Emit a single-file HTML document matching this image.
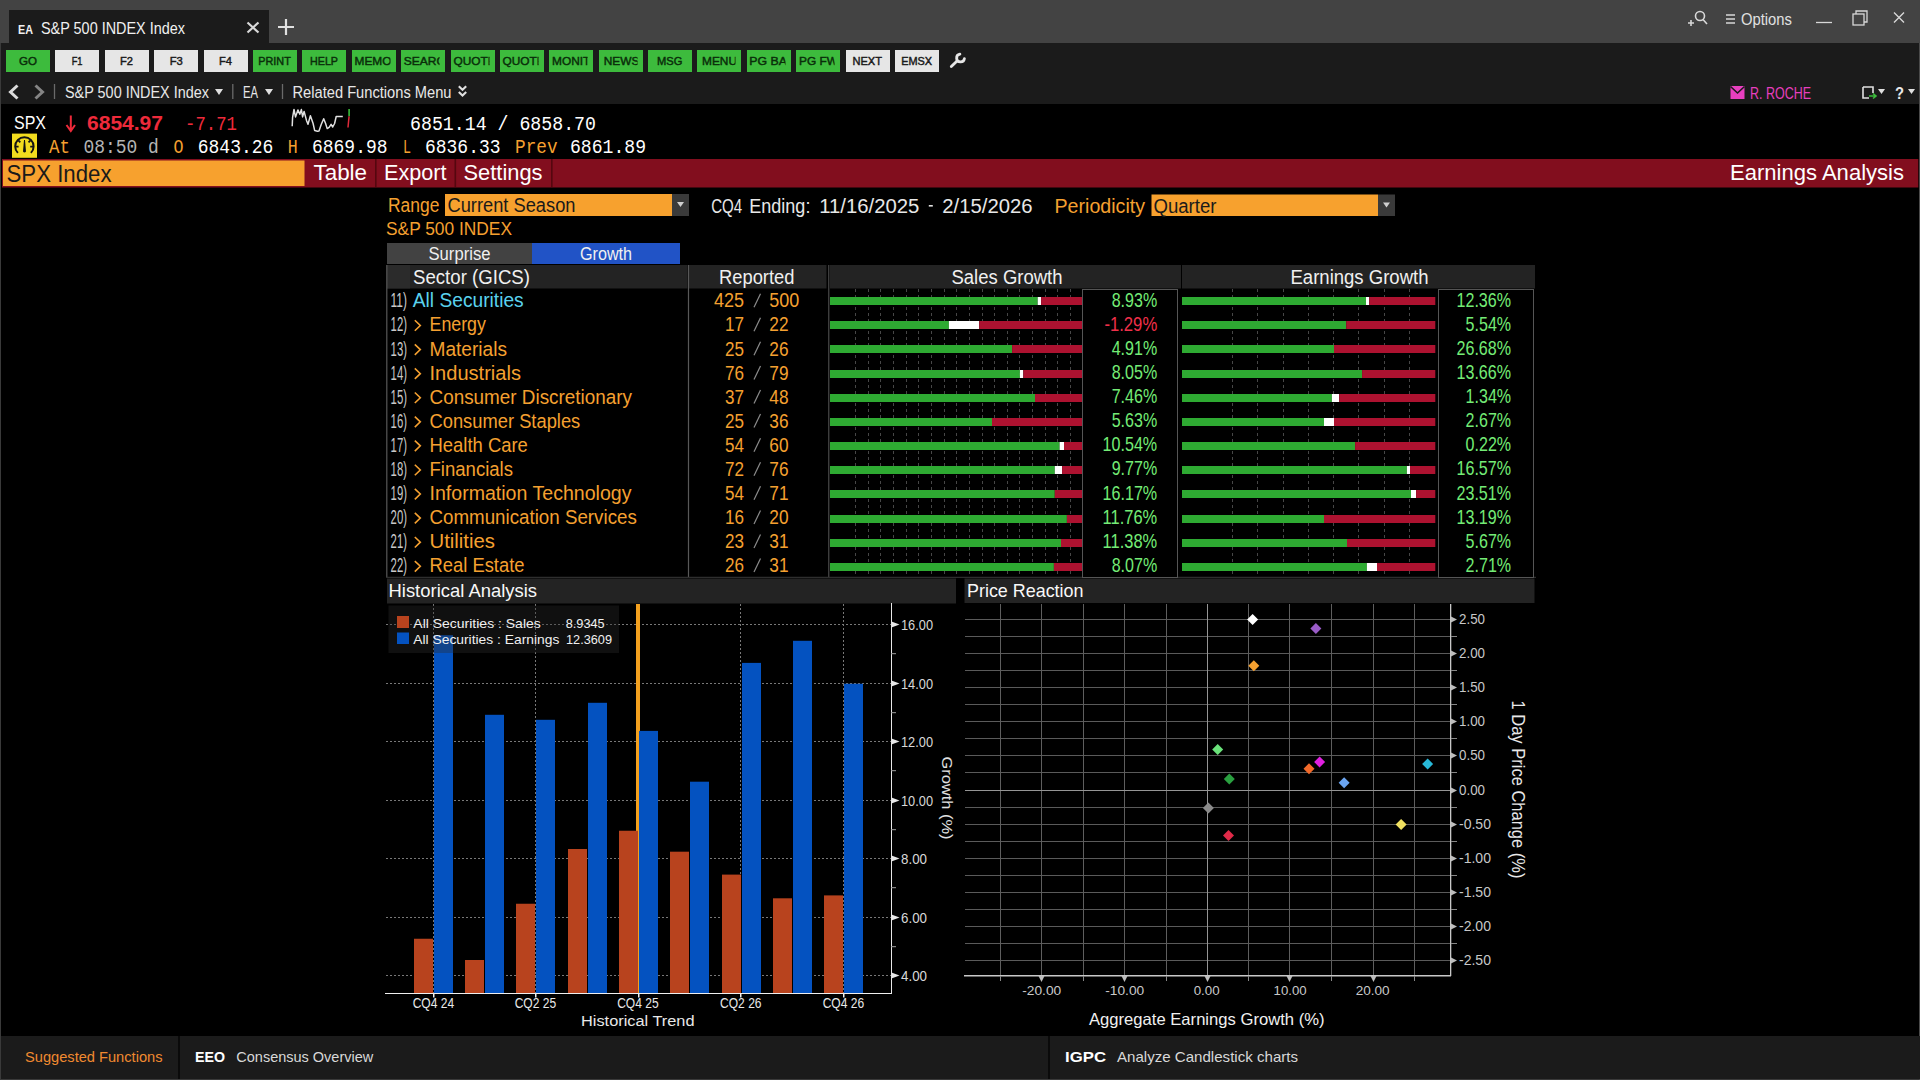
<!DOCTYPE html>
<html><head><meta charset="utf-8"><title>EA S&amp;P 500 INDEX Index</title>
<style>html,body{margin:0;padding:0;background:#000;overflow:hidden;width:1920px;height:1080px}
svg{display:block} text{font-family:"Liberation Sans",sans-serif}</style></head>
<body><svg width="1920" height="1080" viewBox="0 0 1920 1080" shape-rendering="auto">
<rect x="0" y="0" width="1920" height="1080" fill="#000" />
<rect x="0" y="0" width="1920" height="43" fill="#434343" />
<rect x="9" y="10" width="260" height="33" fill="#1b1b1b" />
<rect x="0" y="43" width="1920" height="61" fill="#1b1b1b" />
<line x1="0.5" y1="43" x2="0.5" y2="1080" stroke="#3a3a3a" stroke-width="1" />
<line x1="0" y1="1079.5" x2="1920" y2="1079.5" stroke="#3a3a3a" stroke-width="1" />
<line x1="1919.5" y1="43" x2="1919.5" y2="1080" stroke="#4a4a4a" stroke-width="1" />
<text x="18.00" y="34.2" font-size="13" fill="#f0f0f0" textLength="14.99" lengthAdjust="spacingAndGlyphs" font-weight="bold" >EA</text>
<text x="41.00" y="34.2" font-size="16.5" fill="#f0f0f0" textLength="144.00" lengthAdjust="spacingAndGlyphs" >S&amp;P 500 INDEX Index</text>
<path d="M247.5 22.5 L258.5 32.5 M258.5 22.5 L247.5 32.5" stroke="#d8d8d8" stroke-width="2.2"/>
<path d="M278 27 H294 M286 19 V35" stroke="#e0e0e0" stroke-width="2.2"/>
<circle cx="1700" cy="16" r="4.5" fill="none" stroke="#d8d8d8" stroke-width="1.6"/>
<path d="M1703 19.5 L1707 24 M1688 23 H1694 M1691 20 V26" stroke="#d8d8d8" stroke-width="1.6"/>
<path d="M1726 15 H1735 M1726 19 H1735 M1726 23 H1735" stroke="#d8d8d8" stroke-width="1.3"/>
<text x="1741.00" y="24.5" font-size="16.5" fill="#e0e0e0" textLength="50.98" lengthAdjust="spacingAndGlyphs" >Options</text>
<path d="M1816 22.5 H1832" stroke="#d8d8d8" stroke-width="1.3"/>
<rect x="1853" y="14" width="11" height="11" fill="none" stroke="#d8d8d8" stroke-width="1.3"/><path d="M1856 14 V11 H1867 V22 H1864" fill="none" stroke="#d8d8d8" stroke-width="1.3"/>
<path d="M1894 12.5 L1904 22.5 M1904 12.5 L1894 22.5" stroke="#d8d8d8" stroke-width="1.4"/>
<rect x="6" y="50" width="44" height="22" fill="#3dbb3d" />
<text x="19.00" y="64.8" font-size="11.5" fill="#0a2e0a" textLength="18.01" lengthAdjust="spacingAndGlyphs" stroke="#0a2e0a" stroke-width="0.45">GO</text>
<rect x="55" y="50" width="44" height="22" fill="#e6e6e6" />
<text x="71.70" y="64.8" font-size="11.5" fill="#1a1a1a" textLength="10.80" lengthAdjust="spacingAndGlyphs" stroke="#1a1a1a" stroke-width="0.45">F1</text>
<rect x="105" y="50" width="44" height="22" fill="#e6e6e6" />
<text x="120.00" y="64.8" font-size="11.5" fill="#1a1a1a" textLength="12.99" lengthAdjust="spacingAndGlyphs" stroke="#1a1a1a" stroke-width="0.45">F2</text>
<rect x="154" y="50" width="44" height="22" fill="#e6e6e6" />
<text x="169.70" y="64.8" font-size="11.5" fill="#1a1a1a" textLength="13.09" lengthAdjust="spacingAndGlyphs" stroke="#1a1a1a" stroke-width="0.45">F3</text>
<rect x="204" y="50" width="44" height="22" fill="#e6e6e6" />
<text x="219.00" y="64.8" font-size="11.5" fill="#1a1a1a" textLength="12.99" lengthAdjust="spacingAndGlyphs" stroke="#1a1a1a" stroke-width="0.45">F4</text>
<rect x="253" y="50" width="44" height="22" fill="#3dbb3d" />
<text x="258.30" y="64.8" font-size="11.5" fill="#0a2e0a" textLength="32.50" lengthAdjust="spacingAndGlyphs" stroke="#0a2e0a" stroke-width="0.45">PRINT</text>
<rect x="302" y="50" width="44" height="22" fill="#3dbb3d" />
<text x="310.00" y="64.8" font-size="11.5" fill="#0a2e0a" textLength="28.00" lengthAdjust="spacingAndGlyphs" stroke="#0a2e0a" stroke-width="0.45">HELP</text>
<rect x="352" y="50" width="44" height="22" fill="#3dbb3d" />
<svg x="352" y="50" width="38.5" height="22" overflow="hidden">
<text x="2.50" y="14.799999999999997" font-size="11.5" fill="#0a2e0a" textLength="36.96" lengthAdjust="spacingAndGlyphs" stroke="#0a2e0a" stroke-width="0.45">MEMO</text>
</svg>
<rect x="401" y="50" width="44" height="22" fill="#3dbb3d" />
<svg x="401" y="50" width="38.5" height="22" overflow="hidden">
<text x="2.75" y="14.799999999999997" font-size="11.5" fill="#0a2e0a" textLength="50.16" lengthAdjust="spacingAndGlyphs" stroke="#0a2e0a" stroke-width="0.45">SEARCH</text>
</svg>
<rect x="451" y="50" width="44" height="22" fill="#3dbb3d" />
<svg x="451" y="50" width="38.5" height="22" overflow="hidden">
<text x="2.50" y="14.799999999999997" font-size="11.5" fill="#0a2e0a" textLength="42.24" lengthAdjust="spacingAndGlyphs" stroke="#0a2e0a" stroke-width="0.45">QUOTE</text>
</svg>
<rect x="500" y="50" width="44" height="22" fill="#3dbb3d" />
<svg x="500" y="50" width="38.5" height="22" overflow="hidden">
<text x="2.40" y="14.799999999999997" font-size="11.5" fill="#0a2e0a" textLength="42.24" lengthAdjust="spacingAndGlyphs" stroke="#0a2e0a" stroke-width="0.45">QUOTE</text>
</svg>
<rect x="549" y="50" width="44" height="22" fill="#3dbb3d" />
<svg x="549" y="50" width="38.5" height="22" overflow="hidden">
<text x="3.00" y="14.799999999999997" font-size="11.5" fill="#0a2e0a" textLength="55.88" lengthAdjust="spacingAndGlyphs" stroke="#0a2e0a" stroke-width="0.45">MONITOR</text>
</svg>
<rect x="599" y="50" width="44" height="22" fill="#3dbb3d" />
<svg x="599" y="50" width="38.5" height="22" overflow="hidden">
<text x="4.70" y="14.799999999999997" font-size="11.5" fill="#0a2e0a" textLength="35.64" lengthAdjust="spacingAndGlyphs" stroke="#0a2e0a" stroke-width="0.45">NEWS</text>
</svg>
<rect x="648" y="50" width="44" height="22" fill="#3dbb3d" />
<text x="657.00" y="64.8" font-size="11.5" fill="#0a2e0a" textLength="25.40" lengthAdjust="spacingAndGlyphs" stroke="#0a2e0a" stroke-width="0.45">MSG</text>
<rect x="697" y="50" width="44" height="22" fill="#3dbb3d" />
<svg x="697" y="50" width="38.5" height="22" overflow="hidden">
<text x="5.00" y="14.799999999999997" font-size="11.5" fill="#0a2e0a" textLength="34.98" lengthAdjust="spacingAndGlyphs" stroke="#0a2e0a" stroke-width="0.45">MENU</text>
</svg>
<rect x="747" y="50" width="44" height="22" fill="#3dbb3d" />
<svg x="747" y="50" width="38.5" height="22" overflow="hidden">
<text x="2.30" y="14.799999999999997" font-size="11.5" fill="#0a2e0a" textLength="54.81" lengthAdjust="spacingAndGlyphs" stroke="#0a2e0a" stroke-width="0.45">PG BACK</text>
</svg>
<rect x="796" y="50" width="44" height="22" fill="#3dbb3d" />
<svg x="796" y="50" width="38.5" height="22" overflow="hidden">
<text x="3.00" y="14.799999999999997" font-size="11.5" fill="#0a2e0a" textLength="47.52" lengthAdjust="spacingAndGlyphs" stroke="#0a2e0a" stroke-width="0.45">PG FWD</text>
</svg>
<rect x="846" y="50" width="44" height="22" fill="#e6e6e6" />
<text x="852.50" y="64.8" font-size="11.5" fill="#1a1a1a" textLength="29.49" lengthAdjust="spacingAndGlyphs" stroke="#1a1a1a" stroke-width="0.45">NEXT</text>
<rect x="895" y="50" width="44" height="22" fill="#e6e6e6" />
<text x="901.20" y="64.8" font-size="11.5" fill="#1a1a1a" textLength="30.89" lengthAdjust="spacingAndGlyphs" stroke="#1a1a1a" stroke-width="0.45">EMSX</text>
<path d="M951.3 66.6 L956.8 61.2" stroke="#e6e6e6" stroke-width="2.8" stroke-linecap="round"/>
<path d="M959.9 54.2 A3.9 3.9 0 1 0 964.4 58.6" fill="none" stroke="#e6e6e6" stroke-width="2.8" stroke-linecap="round"/>
<path d="M17.5 85.5 L10.5 92 L17.5 98.5" fill="none" stroke="#dcdcdc" stroke-width="3"/>
<path d="M35.5 85.5 L42.5 92 L35.5 98.5" fill="none" stroke="#858585" stroke-width="3"/>
<line x1="54.5" y1="84" x2="54.5" y2="99" stroke="#6a6a6a" stroke-width="1.3" />
<text x="65.00" y="97.8" font-size="16.8" fill="#e8e8e8" textLength="144.00" lengthAdjust="spacingAndGlyphs" >S&amp;P 500 INDEX Index</text>
<path d="M215 89 H223 L219 95 Z" fill="#e0e0e0"/>
<line x1="232.8" y1="84" x2="232.8" y2="99" stroke="#6a6a6a" stroke-width="1.3" />
<text x="243.00" y="97.8" font-size="16.8" fill="#e8e8e8" textLength="14.99" lengthAdjust="spacingAndGlyphs" >EA</text>
<path d="M265 89 H273 L269 95 Z" fill="#e0e0e0"/>
<line x1="282.5" y1="84" x2="282.5" y2="99" stroke="#6a6a6a" stroke-width="1.3" />
<text x="292.50" y="97.8" font-size="16.8" fill="#e8e8e8" textLength="159.00" lengthAdjust="spacingAndGlyphs" >Related Functions Menu</text>
<path d="M458.8 86.2 L462.5 89.8 L466.2 86.2 M458.8 92 L462.5 95.6 L466.2 92" fill="none" stroke="#e0e0e0" stroke-width="2.1"/>
<rect x="1730.5" y="86" width="14" height="13" fill="#e83fbf"/><path d="M1730.5 86.5 L1737.5 93 L1744.5 86.5" fill="none" stroke="#1b1b1b" stroke-width="1.6"/>
<text x="1750.00" y="98.75" font-size="16.5" fill="#e83fbf" textLength="60.99" lengthAdjust="spacingAndGlyphs" >R. ROCHE</text>
<path d="M1863 87 H1873 V93 M1863 87 V98 H1869" fill="none" stroke="#e0e0e0" stroke-width="1.6"/><path d="M1869 96 H1875 M1873 93.5 L1876 96 L1873 98.5" fill="none" stroke="#3cbc3c" stroke-width="1.6"/>
<path d="M1878 89 H1885 L1881.5 94 Z" fill="#e0e0e0"/>
<text x="1895.00" y="99" font-size="17" fill="#e8e8e8" textLength="9.01" lengthAdjust="spacingAndGlyphs" font-weight="bold" >?</text>
<path d="M1908 89 H1915 L1911.5 94 Z" fill="#e0e0e0"/>
<text x="14.00" y="129.3" font-size="17.5" fill="#ffffff" textLength="32.02" lengthAdjust="spacingAndGlyphs" >SPX</text>
<path d="M70.8 115.5 V130 M66.5 125 L70.8 131 L75 125" fill="none" stroke="#ee2a3a" stroke-width="2"/>
<text x="87.00" y="130.25" font-size="20" fill="#ee2a3a" textLength="76.00" lengthAdjust="spacingAndGlyphs" font-weight="bold" >6854.97</text>
<text x="185.00" y="130.25" font-size="20" fill="#ee2a3a" textLength="52.01" lengthAdjust="spacingAndGlyphs" style="font-family:'Liberation Mono'" >-7.71</text>
<polyline points="292.2,126.3 292.6,117.3 294,109.5 295.5,116.9 297.9,109.9 299.8,114.2 301.4,109.5 302.6,116.9 304.1,111.4 306.5,120.4 308,124.3 310.4,115.7 313.1,123.5 314.7,130.6 317.4,131.3 319,131 321.3,124.3 323.7,118.8 325.6,123.5 327.2,128.6 329.1,127.4 331.1,124.3 332.7,127 334.6,123.5 336.2,116.5 342.8,116.5" fill="none" stroke="#e0e0e0" stroke-width="1.5" stroke-linejoin="round"/>
<line x1="349.1" y1="109" x2="349.1" y2="116.3" stroke="#3cbc3c" stroke-width="1.6" />
<path d="M349.1 116.3 L348.6 121 L348 127.5" fill="none" stroke="#e02a3a" stroke-width="1.5"/>
<text x="410.00" y="130.25" font-size="20" fill="#ffffff" textLength="185.99" lengthAdjust="spacingAndGlyphs" style="font-family:'Liberation Mono'" >6851.14 / 6858.70</text>
<rect x="12" y="133.6" width="25" height="24.2" fill="#f3dc1e"/>
<path d="M17.9 152.9 A9.2 9.2 0 1 1 30.9 152.9" fill="none" stroke="#141414" stroke-width="2"/>
<path d="M15.5 146.6 H18.6 M30.2 146.6 H33.3 M18.3 140.4 L20.3 142.4 M30.5 140.4 L28.5 142.4" stroke="#141414" stroke-width="1.8"/>
<path d="M24 140 L25 140 L26 151.5 Q24.5 153.5 23 151.5 Z" fill="#141414"/>
<text x="49.00" y="153.2" font-size="20" fill="#f5a030" textLength="21.00" lengthAdjust="spacingAndGlyphs" style="font-family:'Liberation Mono'" >At</text>
<text x="83.40" y="153.2" font-size="20" fill="#b4b4b4" textLength="75.51" lengthAdjust="spacingAndGlyphs" style="font-family:'Liberation Mono'" >08:50 d</text>
<text x="173.40" y="153.2" font-size="20" fill="#f5a030" textLength="10.00" lengthAdjust="spacingAndGlyphs" style="font-family:'Liberation Mono'" >O</text>
<text x="197.80" y="153.2" font-size="20" fill="#ffffff" textLength="75.51" lengthAdjust="spacingAndGlyphs" style="font-family:'Liberation Mono'" >6843.26</text>
<text x="287.80" y="153.2" font-size="20" fill="#f5a030" textLength="10.00" lengthAdjust="spacingAndGlyphs" style="font-family:'Liberation Mono'" >H</text>
<text x="312.00" y="153.2" font-size="20" fill="#ffffff" textLength="75.51" lengthAdjust="spacingAndGlyphs" style="font-family:'Liberation Mono'" >6869.98</text>
<text x="403.00" y="153.2" font-size="20" fill="#f5a030" textLength="8.00" lengthAdjust="spacingAndGlyphs" style="font-family:'Liberation Mono'" >L</text>
<text x="425.00" y="153.2" font-size="20" fill="#ffffff" textLength="75.51" lengthAdjust="spacingAndGlyphs" style="font-family:'Liberation Mono'" >6836.33</text>
<text x="515.00" y="153.2" font-size="20" fill="#f5a030" textLength="42.51" lengthAdjust="spacingAndGlyphs" style="font-family:'Liberation Mono'" >Prev</text>
<text x="570.00" y="153.2" font-size="20" fill="#ffffff" textLength="76.01" lengthAdjust="spacingAndGlyphs" style="font-family:'Liberation Mono'" >6861.89</text>
<rect x="2" y="159" width="1916.3" height="28.5" fill="#820e1e" />
<rect x="3" y="160.5" width="301.5" height="25.5" fill="#f7a12e" />
<rect x="375" y="159" width="1.6" height="28" fill="#55070f" />
<rect x="454.5" y="159" width="1.6" height="28" fill="#55070f" />
<rect x="551" y="159" width="1.6" height="28" fill="#55070f" />
<text x="6.50" y="181.7" font-size="23" fill="#1a1a1a" textLength="105.00" lengthAdjust="spacingAndGlyphs" >SPX Index</text>
<text x="313.50" y="180.3" font-size="22.5" fill="#ffffff" textLength="53.52" lengthAdjust="spacingAndGlyphs" >Table</text>
<text x="384.00" y="180.3" font-size="22.5" fill="#ffffff" textLength="62.50" lengthAdjust="spacingAndGlyphs" >Export</text>
<text x="463.50" y="180.3" font-size="22.5" fill="#ffffff" textLength="79.02" lengthAdjust="spacingAndGlyphs" >Settings</text>
<text x="1730.00" y="180.3" font-size="22.5" fill="#ffffff" textLength="174.02" lengthAdjust="spacingAndGlyphs" >Earnings Analysis</text>
<text x="388.00" y="211.8" font-size="19.5" fill="#f5a030" textLength="51.49" lengthAdjust="spacingAndGlyphs" >Range</text>
<rect x="445" y="194" width="227" height="22" fill="#f7a12e" />
<rect x="672" y="194" width="17" height="22" fill="#3a3a3a" />
<path d="M677 202 H684 L680.5 207 Z" fill="#cfcfcf"/>
<text x="447.50" y="211.8" font-size="19.5" fill="#1a1a1a" textLength="127.98" lengthAdjust="spacingAndGlyphs" >Current Season</text>
<text x="711.20" y="212.5" font-size="19.5" fill="#e8e8e8" textLength="31.02" lengthAdjust="spacingAndGlyphs" >CQ4</text>
<text x="749.30" y="212.5" font-size="19.5" fill="#e8e8e8" textLength="61.09" lengthAdjust="spacingAndGlyphs" >Ending:</text>
<text x="819.20" y="212.5" font-size="19.5" fill="#e8e8e8" textLength="100.12" lengthAdjust="spacingAndGlyphs" >11/16/2025</text>
<text x="942.30" y="212.5" font-size="19.5" fill="#e8e8e8" textLength="90.28" lengthAdjust="spacingAndGlyphs" >2/15/2026</text>
<rect x="928.8" y="205" width="4" height="1.6" fill="#e0e0e0" />
<text x="1054.50" y="212.5" font-size="19.5" fill="#f5a030" textLength="90.51" lengthAdjust="spacingAndGlyphs" >Periodicity</text>
<rect x="1151.5" y="194.5" width="226.5" height="21.5" fill="#f7a12e" />
<rect x="1378" y="194.5" width="17" height="21.5" fill="#3a3a3a" />
<path d="M1383 202.5 H1390 L1386.5 207.5 Z" fill="#cfcfcf"/>
<text x="1153.50" y="212.5" font-size="19.5" fill="#1a1a1a" textLength="63.00" lengthAdjust="spacingAndGlyphs" >Quarter</text>
<text x="386.00" y="235.3" font-size="19" fill="#f5a030" textLength="126.01" lengthAdjust="spacingAndGlyphs" >S&amp;P 500 INDEX</text>
<rect x="387" y="243" width="145" height="21" fill="#424242" />
<rect x="532" y="243" width="148" height="21" fill="#2153c6" />
<text x="428.50" y="259.5" font-size="17.5" fill="#f0f0f0" textLength="62.02" lengthAdjust="spacingAndGlyphs" >Surprise</text>
<text x="580.00" y="259.5" font-size="17.5" fill="#f0f0f0" textLength="52.01" lengthAdjust="spacingAndGlyphs" >Growth</text>
<rect x="387" y="265" width="300.5" height="23.5" fill="#232323" />
<rect x="387" y="265" width="23" height="23.5" fill="#2b2b2b" />
<rect x="689" y="265" width="137.5" height="23.5" fill="#232323" />
<rect x="830" y="265" width="351" height="23.5" fill="#232323" />
<rect x="1182" y="265" width="353" height="23.5" fill="#232323" />
<text x="413.00" y="284.2" font-size="20" fill="#f0f0f0" textLength="116.98" lengthAdjust="spacingAndGlyphs" >Sector (GICS)</text>
<text x="719.00" y="284.2" font-size="20" fill="#f0f0f0" textLength="75.48" lengthAdjust="spacingAndGlyphs" >Reported</text>
<text x="951.50" y="283.8" font-size="20" fill="#f0f0f0" textLength="111.00" lengthAdjust="spacingAndGlyphs" >Sales Growth</text>
<text x="1290.50" y="283.8" font-size="20" fill="#f0f0f0" textLength="138.01" lengthAdjust="spacingAndGlyphs" >Earnings Growth</text>
<line x1="386.8" y1="265" x2="386.8" y2="577" stroke="#585858" stroke-width="1.2" />
<line x1="688.5" y1="265" x2="688.5" y2="577" stroke="#585858" stroke-width="1.2" />
<line x1="828.8" y1="265" x2="828.8" y2="577" stroke="#585858" stroke-width="1" />
<line x1="386" y1="577.3" x2="1536" y2="577.3" stroke="#3a3a3a" stroke-width="1" />
<line x1="855.5" y1="289" x2="855.5" y2="577" stroke="#474747" stroke-width="1" stroke-dasharray="3 3"/>
<line x1="868.5" y1="289" x2="868.5" y2="577" stroke="#474747" stroke-width="1" stroke-dasharray="3 3"/>
<line x1="880.5" y1="289" x2="880.5" y2="577" stroke="#474747" stroke-width="1" stroke-dasharray="3 3"/>
<line x1="893.5" y1="289" x2="893.5" y2="577" stroke="#474747" stroke-width="1" stroke-dasharray="3 3"/>
<line x1="906.5" y1="289" x2="906.5" y2="577" stroke="#474747" stroke-width="1" stroke-dasharray="3 3"/>
<line x1="918.5" y1="289" x2="918.5" y2="577" stroke="#474747" stroke-width="1" stroke-dasharray="3 3"/>
<line x1="931.5" y1="289" x2="931.5" y2="577" stroke="#474747" stroke-width="1" stroke-dasharray="3 3"/>
<line x1="944.5" y1="289" x2="944.5" y2="577" stroke="#474747" stroke-width="1" stroke-dasharray="3 3"/>
<line x1="956.5" y1="289" x2="956.5" y2="577" stroke="#474747" stroke-width="1" stroke-dasharray="3 3"/>
<line x1="969.5" y1="289" x2="969.5" y2="577" stroke="#474747" stroke-width="1" stroke-dasharray="3 3"/>
<line x1="982.5" y1="289" x2="982.5" y2="577" stroke="#474747" stroke-width="1" stroke-dasharray="3 3"/>
<line x1="994.5" y1="289" x2="994.5" y2="577" stroke="#474747" stroke-width="1" stroke-dasharray="3 3"/>
<line x1="1007.5" y1="289" x2="1007.5" y2="577" stroke="#474747" stroke-width="1" stroke-dasharray="3 3"/>
<line x1="1019.5" y1="289" x2="1019.5" y2="577" stroke="#474747" stroke-width="1" stroke-dasharray="3 3"/>
<line x1="1032.5" y1="289" x2="1032.5" y2="577" stroke="#474747" stroke-width="1" stroke-dasharray="3 3"/>
<line x1="1045.5" y1="289" x2="1045.5" y2="577" stroke="#474747" stroke-width="1" stroke-dasharray="3 3"/>
<line x1="1057.5" y1="289" x2="1057.5" y2="577" stroke="#474747" stroke-width="1" stroke-dasharray="3 3"/>
<line x1="1070.5" y1="289" x2="1070.5" y2="577" stroke="#474747" stroke-width="1" stroke-dasharray="3 3"/>
<line x1="1232.5" y1="289" x2="1232.5" y2="577" stroke="#474747" stroke-width="1" stroke-dasharray="3 3"/>
<line x1="1257.5" y1="289" x2="1257.5" y2="577" stroke="#474747" stroke-width="1" stroke-dasharray="3 3"/>
<line x1="1283.5" y1="289" x2="1283.5" y2="577" stroke="#474747" stroke-width="1" stroke-dasharray="3 3"/>
<line x1="1308.5" y1="289" x2="1308.5" y2="577" stroke="#474747" stroke-width="1" stroke-dasharray="3 3"/>
<line x1="1333.5" y1="289" x2="1333.5" y2="577" stroke="#474747" stroke-width="1" stroke-dasharray="3 3"/>
<line x1="1358.5" y1="289" x2="1358.5" y2="577" stroke="#474747" stroke-width="1" stroke-dasharray="3 3"/>
<line x1="1384.5" y1="289" x2="1384.5" y2="577" stroke="#474747" stroke-width="1" stroke-dasharray="3 3"/>
<line x1="1409.5" y1="289" x2="1409.5" y2="577" stroke="#474747" stroke-width="1" stroke-dasharray="3 3"/>
<rect x="830" y="297" width="207.70000000000005" height="8" fill="#2eaa32" />
<rect x="1037.7" y="297" width="3.3999999999998636" height="8" fill="#ffffff" />
<rect x="1041.1" y="297" width="40.90000000000009" height="8" fill="#ad1230" />
<rect x="1182" y="297" width="184" height="8" fill="#2eaa32" />
<rect x="1366" y="297" width="3.2000000000000455" height="8" fill="#ffffff" />
<rect x="1369.2" y="297" width="66.09999999999991" height="8" fill="#ad1230" />
<rect x="830" y="321" width="118.89999999999998" height="8" fill="#2eaa32" />
<rect x="948.9" y="321" width="30.300000000000068" height="8" fill="#ffffff" />
<rect x="979.2" y="321" width="102.79999999999995" height="8" fill="#ad1230" />
<rect x="1182" y="321" width="164.20000000000005" height="8" fill="#2eaa32" />
<rect x="1346.2" y="321" width="89.09999999999991" height="8" fill="#ad1230" />
<rect x="830" y="345" width="182.10000000000002" height="8" fill="#2eaa32" />
<rect x="1012.1" y="345" width="69.89999999999998" height="8" fill="#ad1230" />
<rect x="1182" y="345" width="152" height="8" fill="#2eaa32" />
<rect x="1334" y="345" width="101.29999999999995" height="8" fill="#ad1230" />
<rect x="830" y="370" width="189.89999999999998" height="8" fill="#2eaa32" />
<rect x="1019.9" y="370" width="3.3999999999999773" height="8" fill="#ffffff" />
<rect x="1023.3" y="370" width="58.700000000000045" height="8" fill="#ad1230" />
<rect x="1182" y="370" width="180.0999999999999" height="8" fill="#2eaa32" />
<rect x="1362.1" y="370" width="73.20000000000005" height="8" fill="#ad1230" />
<rect x="830" y="394" width="205" height="8" fill="#2eaa32" />
<rect x="1035" y="394" width="47" height="8" fill="#ad1230" />
<rect x="1182" y="394" width="149.9000000000001" height="8" fill="#2eaa32" />
<rect x="1331.9" y="394" width="7.2999999999999545" height="8" fill="#ffffff" />
<rect x="1339.2" y="394" width="96.09999999999991" height="8" fill="#ad1230" />
<rect x="830" y="418" width="162" height="8" fill="#2eaa32" />
<rect x="992" y="418" width="90" height="8" fill="#ad1230" />
<rect x="1182" y="418" width="142" height="8" fill="#2eaa32" />
<rect x="1324" y="418" width="10" height="8" fill="#ffffff" />
<rect x="1334" y="418" width="101.29999999999995" height="8" fill="#ad1230" />
<rect x="830" y="442" width="229.5999999999999" height="8" fill="#2eaa32" />
<rect x="1059.6" y="442" width="4.400000000000091" height="8" fill="#ffffff" />
<rect x="1064" y="442" width="18" height="8" fill="#ad1230" />
<rect x="1182" y="442" width="173.0999999999999" height="8" fill="#2eaa32" />
<rect x="1355.1" y="442" width="80.20000000000005" height="8" fill="#ad1230" />
<rect x="830" y="466" width="224.79999999999995" height="8" fill="#2eaa32" />
<rect x="1054.8" y="466" width="7.2999999999999545" height="8" fill="#ffffff" />
<rect x="1062.1" y="466" width="19.90000000000009" height="8" fill="#ad1230" />
<rect x="1182" y="466" width="224.9000000000001" height="8" fill="#2eaa32" />
<rect x="1406.9" y="466" width="3.099999999999909" height="8" fill="#ffffff" />
<rect x="1410" y="466" width="25.299999999999955" height="8" fill="#ad1230" />
<rect x="830" y="490" width="224.79999999999995" height="8" fill="#2eaa32" />
<rect x="1054.8" y="490" width="27.200000000000045" height="8" fill="#ad1230" />
<rect x="1182" y="490" width="229" height="8" fill="#2eaa32" />
<rect x="1411" y="490" width="5.099999999999909" height="8" fill="#ffffff" />
<rect x="1416.1" y="490" width="19.200000000000045" height="8" fill="#ad1230" />
<rect x="830" y="515" width="236.9000000000001" height="8" fill="#2eaa32" />
<rect x="1066.9" y="515" width="15.099999999999909" height="8" fill="#ad1230" />
<rect x="1182" y="515" width="142" height="8" fill="#2eaa32" />
<rect x="1324" y="515" width="111.29999999999995" height="8" fill="#ad1230" />
<rect x="830" y="539" width="231" height="8" fill="#2eaa32" />
<rect x="1061" y="539" width="21" height="8" fill="#ad1230" />
<rect x="1182" y="539" width="165" height="8" fill="#2eaa32" />
<rect x="1347" y="539" width="88.29999999999995" height="8" fill="#ad1230" />
<rect x="830" y="563" width="223.9000000000001" height="8" fill="#2eaa32" />
<rect x="1053.9" y="563" width="28.09999999999991" height="8" fill="#ad1230" />
<rect x="1182" y="563" width="184.9000000000001" height="8" fill="#2eaa32" />
<rect x="1366.9" y="563" width="10.099999999999909" height="8" fill="#ffffff" />
<rect x="1377" y="563" width="58.299999999999955" height="8" fill="#ad1230" />
<rect x="1082.5" y="289.5" width="95" height="288" fill="#000" stroke="#555" stroke-width="1"/>
<rect x="1438.5" y="289.5" width="95" height="288" fill="#000" stroke="#555" stroke-width="1"/>
<text x="390.60" y="307.4" font-size="19.5" fill="#c8c8c8" textLength="16.41" lengthAdjust="spacingAndGlyphs" >11)</text>
<text x="412.80" y="307.4" font-size="19.3" fill="#5ad2ee" textLength="110.90" lengthAdjust="spacingAndGlyphs" >All Securities</text>
<text x="714.00" y="307.4" font-size="19.3" fill="#f5a030" textLength="30.02" lengthAdjust="spacingAndGlyphs" >425</text>
<path d="M760.5 293.7 L754 307.2" stroke="#8c8c8c" stroke-width="1.2"/>
<text x="769.30" y="307.4" font-size="19.3" fill="#f5a030" textLength="30.02" lengthAdjust="spacingAndGlyphs" >500</text>
<text x="1111.70" y="306.9" font-size="19.8" fill="#74ec76" textLength="45.51" lengthAdjust="spacingAndGlyphs" >8.93%</text>
<text x="1456.50" y="306.9" font-size="19.8" fill="#74ec76" textLength="54.59" lengthAdjust="spacingAndGlyphs" >12.36%</text>
<text x="390.60" y="331.47999999999996" font-size="19.5" fill="#c8c8c8" textLength="16.40" lengthAdjust="spacingAndGlyphs" >12)</text>
<path d="M414.8 320.28 L420.3 325.47999999999996 L414.8 330.78" fill="none" stroke="#f5a030" stroke-width="1.6"/>
<text x="429.50" y="331.47999999999996" font-size="19.3" fill="#f5a030" textLength="56.42" lengthAdjust="spacingAndGlyphs" >Energy</text>
<text x="725.00" y="331.47999999999996" font-size="19.3" fill="#f5a030" textLength="19.00" lengthAdjust="spacingAndGlyphs" >17</text>
<path d="M760.5 317.78 L754 331.28" stroke="#8c8c8c" stroke-width="1.2"/>
<text x="769.30" y="331.47999999999996" font-size="19.3" fill="#f5a030" textLength="19.20" lengthAdjust="spacingAndGlyphs" >22</text>
<text x="1104.40" y="330.97999999999996" font-size="19.8" fill="#f0304a" textLength="52.82" lengthAdjust="spacingAndGlyphs" >-1.29%</text>
<text x="1465.60" y="330.97999999999996" font-size="19.8" fill="#74ec76" textLength="45.51" lengthAdjust="spacingAndGlyphs" >5.54%</text>
<text x="390.60" y="355.56" font-size="19.5" fill="#c8c8c8" textLength="16.40" lengthAdjust="spacingAndGlyphs" >13)</text>
<path d="M414.8 344.36 L420.3 349.56 L414.8 354.86" fill="none" stroke="#f5a030" stroke-width="1.6"/>
<text x="429.50" y="355.56" font-size="19.3" fill="#f5a030" textLength="77.49" lengthAdjust="spacingAndGlyphs" >Materials</text>
<text x="725.00" y="355.56" font-size="19.3" fill="#f5a030" textLength="19.00" lengthAdjust="spacingAndGlyphs" >25</text>
<path d="M760.5 341.86 L754 355.36" stroke="#8c8c8c" stroke-width="1.2"/>
<text x="769.30" y="355.56" font-size="19.3" fill="#f5a030" textLength="19.20" lengthAdjust="spacingAndGlyphs" >26</text>
<text x="1111.70" y="355.06" font-size="19.8" fill="#74ec76" textLength="45.51" lengthAdjust="spacingAndGlyphs" >4.91%</text>
<text x="1456.50" y="355.06" font-size="19.8" fill="#74ec76" textLength="54.59" lengthAdjust="spacingAndGlyphs" >26.68%</text>
<text x="390.60" y="379.64" font-size="19.5" fill="#c8c8c8" textLength="16.40" lengthAdjust="spacingAndGlyphs" >14)</text>
<path d="M414.8 368.44 L420.3 373.64 L414.8 378.94" fill="none" stroke="#f5a030" stroke-width="1.6"/>
<text x="429.50" y="379.64" font-size="19.3" fill="#f5a030" textLength="91.51" lengthAdjust="spacingAndGlyphs" >Industrials</text>
<text x="725.00" y="379.64" font-size="19.3" fill="#f5a030" textLength="19.00" lengthAdjust="spacingAndGlyphs" >76</text>
<path d="M760.5 365.94 L754 379.44" stroke="#8c8c8c" stroke-width="1.2"/>
<text x="769.30" y="379.64" font-size="19.3" fill="#f5a030" textLength="19.20" lengthAdjust="spacingAndGlyphs" >79</text>
<text x="1111.70" y="379.14" font-size="19.8" fill="#74ec76" textLength="45.51" lengthAdjust="spacingAndGlyphs" >8.05%</text>
<text x="1456.50" y="379.14" font-size="19.8" fill="#74ec76" textLength="54.59" lengthAdjust="spacingAndGlyphs" >13.66%</text>
<text x="390.60" y="403.71999999999997" font-size="19.5" fill="#c8c8c8" textLength="16.40" lengthAdjust="spacingAndGlyphs" >15)</text>
<path d="M414.8 392.52 L420.3 397.71999999999997 L414.8 403.02" fill="none" stroke="#f5a030" stroke-width="1.6"/>
<text x="429.50" y="403.71999999999997" font-size="19.3" fill="#f5a030" textLength="202.52" lengthAdjust="spacingAndGlyphs" >Consumer Discretionary</text>
<text x="725.00" y="403.71999999999997" font-size="19.3" fill="#f5a030" textLength="19.00" lengthAdjust="spacingAndGlyphs" >37</text>
<path d="M760.5 390.02 L754 403.52" stroke="#8c8c8c" stroke-width="1.2"/>
<text x="769.30" y="403.71999999999997" font-size="19.3" fill="#f5a030" textLength="19.20" lengthAdjust="spacingAndGlyphs" >48</text>
<text x="1111.70" y="403.21999999999997" font-size="19.8" fill="#74ec76" textLength="45.51" lengthAdjust="spacingAndGlyphs" >7.46%</text>
<text x="1465.60" y="403.21999999999997" font-size="19.8" fill="#74ec76" textLength="45.51" lengthAdjust="spacingAndGlyphs" >1.34%</text>
<text x="390.60" y="427.79999999999995" font-size="19.5" fill="#c8c8c8" textLength="16.40" lengthAdjust="spacingAndGlyphs" >16)</text>
<path d="M414.8 416.59999999999997 L420.3 421.79999999999995 L414.8 427.09999999999997" fill="none" stroke="#f5a030" stroke-width="1.6"/>
<text x="429.50" y="427.79999999999995" font-size="19.3" fill="#f5a030" textLength="150.78" lengthAdjust="spacingAndGlyphs" >Consumer Staples</text>
<text x="725.00" y="427.79999999999995" font-size="19.3" fill="#f5a030" textLength="19.00" lengthAdjust="spacingAndGlyphs" >25</text>
<path d="M760.5 414.09999999999997 L754 427.59999999999997" stroke="#8c8c8c" stroke-width="1.2"/>
<text x="769.30" y="427.79999999999995" font-size="19.3" fill="#f5a030" textLength="19.20" lengthAdjust="spacingAndGlyphs" >36</text>
<text x="1111.70" y="427.29999999999995" font-size="19.8" fill="#74ec76" textLength="45.51" lengthAdjust="spacingAndGlyphs" >5.63%</text>
<text x="1465.60" y="427.29999999999995" font-size="19.8" fill="#74ec76" textLength="45.51" lengthAdjust="spacingAndGlyphs" >2.67%</text>
<text x="390.60" y="451.87999999999994" font-size="19.5" fill="#c8c8c8" textLength="16.40" lengthAdjust="spacingAndGlyphs" >17)</text>
<path d="M414.8 440.67999999999995 L420.3 445.87999999999994 L414.8 451.17999999999995" fill="none" stroke="#f5a030" stroke-width="1.6"/>
<text x="429.50" y="451.87999999999994" font-size="19.3" fill="#f5a030" textLength="98.32" lengthAdjust="spacingAndGlyphs" >Health Care</text>
<text x="725.00" y="451.87999999999994" font-size="19.3" fill="#f5a030" textLength="19.00" lengthAdjust="spacingAndGlyphs" >54</text>
<path d="M760.5 438.17999999999995 L754 451.67999999999995" stroke="#8c8c8c" stroke-width="1.2"/>
<text x="769.30" y="451.87999999999994" font-size="19.3" fill="#f5a030" textLength="19.20" lengthAdjust="spacingAndGlyphs" >60</text>
<text x="1102.60" y="451.37999999999994" font-size="19.8" fill="#74ec76" textLength="54.59" lengthAdjust="spacingAndGlyphs" >10.54%</text>
<text x="1465.60" y="451.37999999999994" font-size="19.8" fill="#74ec76" textLength="45.51" lengthAdjust="spacingAndGlyphs" >0.22%</text>
<text x="390.60" y="475.96" font-size="19.5" fill="#c8c8c8" textLength="16.40" lengthAdjust="spacingAndGlyphs" >18)</text>
<path d="M414.8 464.76 L420.3 469.96 L414.8 475.26" fill="none" stroke="#f5a030" stroke-width="1.6"/>
<text x="429.50" y="475.96" font-size="19.3" fill="#f5a030" textLength="83.49" lengthAdjust="spacingAndGlyphs" >Financials</text>
<text x="725.00" y="475.96" font-size="19.3" fill="#f5a030" textLength="19.00" lengthAdjust="spacingAndGlyphs" >72</text>
<path d="M760.5 462.26 L754 475.76" stroke="#8c8c8c" stroke-width="1.2"/>
<text x="769.30" y="475.96" font-size="19.3" fill="#f5a030" textLength="19.20" lengthAdjust="spacingAndGlyphs" >76</text>
<text x="1111.70" y="475.46" font-size="19.8" fill="#74ec76" textLength="45.51" lengthAdjust="spacingAndGlyphs" >9.77%</text>
<text x="1456.50" y="475.46" font-size="19.8" fill="#74ec76" textLength="54.59" lengthAdjust="spacingAndGlyphs" >16.57%</text>
<text x="390.60" y="500.03999999999996" font-size="19.5" fill="#c8c8c8" textLength="16.40" lengthAdjust="spacingAndGlyphs" >19)</text>
<path d="M414.8 488.84 L420.3 494.03999999999996 L414.8 499.34" fill="none" stroke="#f5a030" stroke-width="1.6"/>
<text x="429.50" y="500.03999999999996" font-size="19.3" fill="#f5a030" textLength="201.98" lengthAdjust="spacingAndGlyphs" >Information Technology</text>
<text x="725.00" y="500.03999999999996" font-size="19.3" fill="#f5a030" textLength="19.00" lengthAdjust="spacingAndGlyphs" >54</text>
<path d="M760.5 486.34 L754 499.84" stroke="#8c8c8c" stroke-width="1.2"/>
<text x="769.30" y="500.03999999999996" font-size="19.3" fill="#f5a030" textLength="19.20" lengthAdjust="spacingAndGlyphs" >71</text>
<text x="1102.60" y="499.53999999999996" font-size="19.8" fill="#74ec76" textLength="54.59" lengthAdjust="spacingAndGlyphs" >16.17%</text>
<text x="1456.50" y="499.53999999999996" font-size="19.8" fill="#74ec76" textLength="54.59" lengthAdjust="spacingAndGlyphs" >23.51%</text>
<text x="390.60" y="524.12" font-size="19.5" fill="#c8c8c8" textLength="16.40" lengthAdjust="spacingAndGlyphs" >20)</text>
<path d="M414.8 512.92 L420.3 518.12 L414.8 523.42" fill="none" stroke="#f5a030" stroke-width="1.6"/>
<text x="429.50" y="524.12" font-size="19.3" fill="#f5a030" textLength="207.30" lengthAdjust="spacingAndGlyphs" >Communication Services</text>
<text x="725.00" y="524.12" font-size="19.3" fill="#f5a030" textLength="19.00" lengthAdjust="spacingAndGlyphs" >16</text>
<path d="M760.5 510.41999999999996 L754 523.92" stroke="#8c8c8c" stroke-width="1.2"/>
<text x="769.30" y="524.12" font-size="19.3" fill="#f5a030" textLength="19.20" lengthAdjust="spacingAndGlyphs" >20</text>
<text x="1102.60" y="523.62" font-size="19.8" fill="#74ec76" textLength="54.60" lengthAdjust="spacingAndGlyphs" >11.76%</text>
<text x="1456.50" y="523.62" font-size="19.8" fill="#74ec76" textLength="54.59" lengthAdjust="spacingAndGlyphs" >13.19%</text>
<text x="390.60" y="548.2" font-size="19.5" fill="#c8c8c8" textLength="16.40" lengthAdjust="spacingAndGlyphs" >21)</text>
<path d="M414.8 537.0 L420.3 542.2 L414.8 547.5" fill="none" stroke="#f5a030" stroke-width="1.6"/>
<text x="429.50" y="548.2" font-size="19.3" fill="#f5a030" textLength="65.51" lengthAdjust="spacingAndGlyphs" >Utilities</text>
<text x="725.00" y="548.2" font-size="19.3" fill="#f5a030" textLength="19.00" lengthAdjust="spacingAndGlyphs" >23</text>
<path d="M760.5 534.5 L754 548.0" stroke="#8c8c8c" stroke-width="1.2"/>
<text x="769.30" y="548.2" font-size="19.3" fill="#f5a030" textLength="19.20" lengthAdjust="spacingAndGlyphs" >31</text>
<text x="1102.60" y="547.7" font-size="19.8" fill="#74ec76" textLength="54.60" lengthAdjust="spacingAndGlyphs" >11.38%</text>
<text x="1465.60" y="547.7" font-size="19.8" fill="#74ec76" textLength="45.51" lengthAdjust="spacingAndGlyphs" >5.67%</text>
<text x="390.60" y="572.28" font-size="19.5" fill="#c8c8c8" textLength="16.40" lengthAdjust="spacingAndGlyphs" >22)</text>
<path d="M414.8 561.0799999999999 L420.3 566.28 L414.8 571.5799999999999" fill="none" stroke="#f5a030" stroke-width="1.6"/>
<text x="429.50" y="572.28" font-size="19.3" fill="#f5a030" textLength="94.99" lengthAdjust="spacingAndGlyphs" >Real Estate</text>
<text x="725.00" y="572.28" font-size="19.3" fill="#f5a030" textLength="19.00" lengthAdjust="spacingAndGlyphs" >26</text>
<path d="M760.5 558.5799999999999 L754 572.0799999999999" stroke="#8c8c8c" stroke-width="1.2"/>
<text x="769.30" y="572.28" font-size="19.3" fill="#f5a030" textLength="19.20" lengthAdjust="spacingAndGlyphs" >31</text>
<text x="1111.70" y="571.78" font-size="19.8" fill="#74ec76" textLength="45.51" lengthAdjust="spacingAndGlyphs" >8.07%</text>
<text x="1465.60" y="571.78" font-size="19.8" fill="#74ec76" textLength="45.51" lengthAdjust="spacingAndGlyphs" >2.71%</text>
<rect x="387" y="578.5" width="569" height="25" fill="#232323" />
<rect x="964.5" y="578.5" width="570" height="24.5" fill="#232323" />
<text x="388.50" y="597.3" font-size="18.5" fill="#f8f8f8" textLength="148.52" lengthAdjust="spacingAndGlyphs" >Historical Analysis</text>
<text x="967.00" y="597.3" font-size="18.5" fill="#f8f8f8" textLength="116.51" lengthAdjust="spacingAndGlyphs" >Price Reaction</text>
<line x1="386" y1="624.5" x2="891" y2="624.5" stroke="#787878" stroke-width="1" stroke-dasharray="2 2"/>
<line x1="386" y1="683.5" x2="891" y2="683.5" stroke="#787878" stroke-width="1" stroke-dasharray="2 2"/>
<line x1="386" y1="741.5" x2="891" y2="741.5" stroke="#787878" stroke-width="1" stroke-dasharray="2 2"/>
<line x1="386" y1="800.5" x2="891" y2="800.5" stroke="#787878" stroke-width="1" stroke-dasharray="2 2"/>
<line x1="386" y1="858.5" x2="891" y2="858.5" stroke="#787878" stroke-width="1" stroke-dasharray="2 2"/>
<line x1="386" y1="917.5" x2="891" y2="917.5" stroke="#787878" stroke-width="1" stroke-dasharray="2 2"/>
<line x1="386" y1="975.5" x2="891" y2="975.5" stroke="#787878" stroke-width="1" stroke-dasharray="2 2"/>
<line x1="433.5" y1="604" x2="433.5" y2="993" stroke="#787878" stroke-width="1" stroke-dasharray="2 2"/>
<line x1="535.5" y1="604" x2="535.5" y2="993" stroke="#787878" stroke-width="1" stroke-dasharray="2 2"/>
<line x1="740.5" y1="604" x2="740.5" y2="993" stroke="#787878" stroke-width="1" stroke-dasharray="2 2"/>
<line x1="843.5" y1="604" x2="843.5" y2="993" stroke="#787878" stroke-width="1" stroke-dasharray="2 2"/>
<rect x="636" y="604" width="4" height="389" fill="#f3a01e" />
<rect x="414" y="938.75" width="19" height="54.25" fill="#b8431e" />
<rect x="434" y="635.2" width="19" height="357.79999999999995" fill="#0452c0" />
<rect x="465" y="960" width="19" height="33" fill="#b8431e" />
<rect x="485" y="714.8" width="19" height="278.20000000000005" fill="#0452c0" />
<rect x="516" y="903.75" width="19" height="89.25" fill="#b8431e" />
<rect x="536" y="719.8" width="19" height="273.20000000000005" fill="#0452c0" />
<rect x="568" y="849" width="19" height="144" fill="#b8431e" />
<rect x="588" y="702.8" width="19" height="290.20000000000005" fill="#0452c0" />
<rect x="619" y="830.75" width="19" height="162.25" fill="#b8431e" />
<rect x="639" y="730.9" width="19" height="262.1" fill="#0452c0" />
<rect x="670" y="851.7" width="19" height="141.29999999999995" fill="#b8431e" />
<rect x="690" y="781.7" width="19" height="211.29999999999995" fill="#0452c0" />
<rect x="722" y="874.6" width="19" height="118.39999999999998" fill="#b8431e" />
<rect x="742" y="662.9" width="19" height="330.1" fill="#0452c0" />
<rect x="773" y="898.3" width="19" height="94.70000000000005" fill="#b8431e" />
<rect x="793" y="640.8" width="19" height="352.20000000000005" fill="#0452c0" />
<rect x="824" y="895.4" width="19" height="97.60000000000002" fill="#b8431e" />
<rect x="844" y="683.75" width="19" height="309.25" fill="#0452c0" />
<rect x="388.5" y="605.5" width="230.5" height="47.5" fill="#2c2c2c" fill-opacity="0.36"/>
<rect x="397" y="616" width="12" height="12" fill="#b8431e" />
<rect x="397" y="632.5" width="12" height="11.5" fill="#0452c0" />
<text x="413.30" y="627.8" font-size="13.5" fill="#f0f0f0" textLength="127.50" lengthAdjust="spacingAndGlyphs" >All Securities : Sales</text>
<text x="565.70" y="627.8" font-size="13.5" fill="#f0f0f0" textLength="39.02" lengthAdjust="spacingAndGlyphs" >8.9345</text>
<text x="413.30" y="644" font-size="13.5" fill="#f0f0f0" textLength="146.01" lengthAdjust="spacingAndGlyphs" >All Securities : Earnings</text>
<text x="566.00" y="644" font-size="13.5" fill="#f0f0f0" textLength="46.00" lengthAdjust="spacingAndGlyphs" >12.3609</text>
<rect x="385" y="993" width="506.5" height="1" fill="#f0f0f0" />
<rect x="891" y="603" width="1" height="391" fill="#e8e8e8" />
<path d="M891.5 621.5 L899.5 624.5 L891.5 627.5 Z" fill="#e8e8e8"/>
<text x="901.00" y="630.1" font-size="14.5" fill="#d8d8d8" textLength="32.00" lengthAdjust="spacingAndGlyphs" >16.00</text>
<line x1="891" y1="653.7" x2="896" y2="653.7" stroke="#a0a0a0" stroke-width="1" />
<path d="M891.5 680.5 L899.5 683.5 L891.5 686.5 Z" fill="#e8e8e8"/>
<text x="901.00" y="689.1" font-size="14.5" fill="#d8d8d8" textLength="32.00" lengthAdjust="spacingAndGlyphs" >14.00</text>
<line x1="891" y1="712.7" x2="896" y2="712.7" stroke="#a0a0a0" stroke-width="1" />
<path d="M891.5 738.5 L899.5 741.5 L891.5 744.5 Z" fill="#e8e8e8"/>
<text x="901.00" y="747.1" font-size="14.5" fill="#d8d8d8" textLength="32.00" lengthAdjust="spacingAndGlyphs" >12.00</text>
<line x1="891" y1="770.7" x2="896" y2="770.7" stroke="#a0a0a0" stroke-width="1" />
<path d="M891.5 797.5 L899.5 800.5 L891.5 803.5 Z" fill="#e8e8e8"/>
<text x="901.00" y="806.1" font-size="14.5" fill="#d8d8d8" textLength="32.00" lengthAdjust="spacingAndGlyphs" >10.00</text>
<line x1="891" y1="829.7" x2="896" y2="829.7" stroke="#a0a0a0" stroke-width="1" />
<path d="M891.5 855.5 L899.5 858.5 L891.5 861.5 Z" fill="#e8e8e8"/>
<text x="901.00" y="864.1" font-size="14.5" fill="#d8d8d8" textLength="25.98" lengthAdjust="spacingAndGlyphs" >8.00</text>
<line x1="891" y1="887.7" x2="896" y2="887.7" stroke="#a0a0a0" stroke-width="1" />
<path d="M891.5 914.5 L899.5 917.5 L891.5 920.5 Z" fill="#e8e8e8"/>
<text x="901.00" y="923.1" font-size="14.5" fill="#d8d8d8" textLength="25.98" lengthAdjust="spacingAndGlyphs" >6.00</text>
<line x1="891" y1="946.7" x2="896" y2="946.7" stroke="#a0a0a0" stroke-width="1" />
<path d="M891.5 972.5 L899.5 975.5 L891.5 978.5 Z" fill="#e8e8e8"/>
<text x="901.00" y="981.1" font-size="14.5" fill="#d8d8d8" textLength="25.98" lengthAdjust="spacingAndGlyphs" >4.00</text>
<text x="0.00" y="0" font-size="15.5" fill="#e0e0e0" textLength="82.98" lengthAdjust="spacingAndGlyphs" transform="translate(941.5 756.5) rotate(90)">Growth (%)</text>
<rect x="433" y="994" width="1.5" height="3.5" fill="#f0f0f0" />
<rect x="535" y="994" width="1.5" height="3.5" fill="#f0f0f0" />
<rect x="638" y="994" width="1.5" height="3.5" fill="#f0f0f0" />
<rect x="740" y="994" width="1.5" height="3.5" fill="#f0f0f0" />
<rect x="843" y="994" width="1.5" height="3.5" fill="#f0f0f0" />
<text x="412.65" y="1007.8" font-size="15" fill="#e8e8e8" textLength="41.49" lengthAdjust="spacingAndGlyphs" >CQ4 24</text>
<text x="514.65" y="1007.8" font-size="15" fill="#e8e8e8" textLength="41.49" lengthAdjust="spacingAndGlyphs" >CQ2 25</text>
<text x="617.15" y="1007.8" font-size="15" fill="#e8e8e8" textLength="41.49" lengthAdjust="spacingAndGlyphs" >CQ4 25</text>
<text x="720.05" y="1007.8" font-size="15" fill="#e8e8e8" textLength="41.49" lengthAdjust="spacingAndGlyphs" >CQ2 26</text>
<text x="822.65" y="1007.8" font-size="15" fill="#e8e8e8" textLength="41.49" lengthAdjust="spacingAndGlyphs" >CQ4 26</text>
<text x="581.00" y="1026.3" font-size="15.5" fill="#e8e8e8" textLength="113.49" lengthAdjust="spacingAndGlyphs" >Historical Trend</text>
<rect x="965" y="619" width="486" height="1" fill="#5a5a5a" />
<rect x="965" y="636" width="486" height="1" fill="#5a5a5a" />
<rect x="965" y="653" width="486" height="1" fill="#5a5a5a" />
<rect x="965" y="670" width="486" height="1" fill="#5a5a5a" />
<rect x="965" y="687" width="486" height="1" fill="#5a5a5a" />
<rect x="965" y="704" width="486" height="1" fill="#5a5a5a" />
<rect x="965" y="721" width="486" height="1" fill="#5a5a5a" />
<rect x="965" y="738" width="486" height="1" fill="#5a5a5a" />
<rect x="965" y="755" width="486" height="1" fill="#5a5a5a" />
<rect x="965" y="772" width="486" height="1" fill="#5a5a5a" />
<rect x="965" y="807" width="486" height="1" fill="#5a5a5a" />
<rect x="965" y="824" width="486" height="1" fill="#5a5a5a" />
<rect x="965" y="841" width="486" height="1" fill="#5a5a5a" />
<rect x="965" y="858" width="486" height="1" fill="#5a5a5a" />
<rect x="965" y="875" width="486" height="1" fill="#5a5a5a" />
<rect x="965" y="892" width="486" height="1" fill="#5a5a5a" />
<rect x="965" y="909" width="486" height="1" fill="#5a5a5a" />
<rect x="965" y="926" width="486" height="1" fill="#5a5a5a" />
<rect x="965" y="943" width="486" height="1" fill="#5a5a5a" />
<rect x="965" y="960" width="486" height="1" fill="#5a5a5a" />
<rect x="1000" y="604" width="1" height="372" fill="#5e5e5e" />
<rect x="1041" y="604" width="1" height="372" fill="#5e5e5e" />
<rect x="1083" y="604" width="1" height="372" fill="#5e5e5e" />
<rect x="1124" y="604" width="1" height="372" fill="#5e5e5e" />
<rect x="1166" y="604" width="1" height="372" fill="#5e5e5e" />
<rect x="1248" y="604" width="1" height="372" fill="#5e5e5e" />
<rect x="1289" y="604" width="1" height="372" fill="#5e5e5e" />
<rect x="1331" y="604" width="1" height="372" fill="#5e5e5e" />
<rect x="1373" y="604" width="1" height="372" fill="#5e5e5e" />
<rect x="1414" y="604" width="1" height="372" fill="#5e5e5e" />
<rect x="965" y="790" width="486" height="1" fill="#959595" />
<rect x="1207" y="604" width="1" height="372" fill="#959595" />
<rect x="964" y="975" width="487" height="1.5" fill="#c8c8c8" />
<rect x="1450" y="604" width="1.3" height="372" fill="#c8c8c8" />
<path d="M1451 616.5 L1457 619.5 L1451 622.5 Z" fill="#bdbdbd"/>
<text x="1459.00" y="623.8" font-size="15" fill="#c8c8c8" textLength="25.98" lengthAdjust="spacingAndGlyphs" >2.50</text>
<line x1="1451" y1="636.5" x2="1457" y2="636.5" stroke="#888" stroke-width="1" />
<path d="M1451 650.5 L1457 653.5 L1451 656.5 Z" fill="#bdbdbd"/>
<text x="1459.00" y="657.8" font-size="15" fill="#c8c8c8" textLength="25.98" lengthAdjust="spacingAndGlyphs" >2.00</text>
<line x1="1451" y1="670.5" x2="1457" y2="670.5" stroke="#888" stroke-width="1" />
<path d="M1451 684.5 L1457 687.5 L1451 690.5 Z" fill="#bdbdbd"/>
<text x="1459.00" y="691.8" font-size="15" fill="#c8c8c8" textLength="25.98" lengthAdjust="spacingAndGlyphs" >1.50</text>
<line x1="1451" y1="704.5" x2="1457" y2="704.5" stroke="#888" stroke-width="1" />
<path d="M1451 718.5 L1457 721.5 L1451 724.5 Z" fill="#bdbdbd"/>
<text x="1459.00" y="725.8" font-size="15" fill="#c8c8c8" textLength="25.98" lengthAdjust="spacingAndGlyphs" >1.00</text>
<line x1="1451" y1="738.5" x2="1457" y2="738.5" stroke="#888" stroke-width="1" />
<path d="M1451 752.5 L1457 755.5 L1451 758.5 Z" fill="#bdbdbd"/>
<text x="1459.00" y="759.8" font-size="15" fill="#c8c8c8" textLength="25.98" lengthAdjust="spacingAndGlyphs" >0.50</text>
<line x1="1451" y1="772.5" x2="1457" y2="772.5" stroke="#888" stroke-width="1" />
<path d="M1451 787.5 L1457 790.5 L1451 793.5 Z" fill="#bdbdbd"/>
<text x="1459.00" y="794.8" font-size="15" fill="#c8c8c8" textLength="25.98" lengthAdjust="spacingAndGlyphs" >0.00</text>
<line x1="1451" y1="807.5" x2="1457" y2="807.5" stroke="#888" stroke-width="1" />
<path d="M1451 821.5 L1457 824.5 L1451 827.5 Z" fill="#bdbdbd"/>
<text x="1459.00" y="828.8" font-size="15" fill="#c8c8c8" textLength="31.99" lengthAdjust="spacingAndGlyphs" >-0.50</text>
<line x1="1451" y1="841.5" x2="1457" y2="841.5" stroke="#888" stroke-width="1" />
<path d="M1451 855.5 L1457 858.5 L1451 861.5 Z" fill="#bdbdbd"/>
<text x="1459.00" y="862.8" font-size="15" fill="#c8c8c8" textLength="31.99" lengthAdjust="spacingAndGlyphs" >-1.00</text>
<line x1="1451" y1="875.5" x2="1457" y2="875.5" stroke="#888" stroke-width="1" />
<path d="M1451 889.5 L1457 892.5 L1451 895.5 Z" fill="#bdbdbd"/>
<text x="1459.00" y="896.8" font-size="15" fill="#c8c8c8" textLength="31.99" lengthAdjust="spacingAndGlyphs" >-1.50</text>
<line x1="1451" y1="909.5" x2="1457" y2="909.5" stroke="#888" stroke-width="1" />
<path d="M1451 923.5 L1457 926.5 L1451 929.5 Z" fill="#bdbdbd"/>
<text x="1459.00" y="930.8" font-size="15" fill="#c8c8c8" textLength="31.99" lengthAdjust="spacingAndGlyphs" >-2.00</text>
<line x1="1451" y1="943.5" x2="1457" y2="943.5" stroke="#888" stroke-width="1" />
<path d="M1451 957.5 L1457 960.5 L1451 963.5 Z" fill="#bdbdbd"/>
<text x="1459.00" y="964.8" font-size="15" fill="#c8c8c8" textLength="31.99" lengthAdjust="spacingAndGlyphs" >-2.50</text>
<path d="M1038.5 976 L1041.5 982 L1044.5 976 Z" fill="#bdbdbd"/>
<path d="M1121.5 976 L1124.5 982 L1127.5 976 Z" fill="#bdbdbd"/>
<path d="M1204.5 976 L1207.5 982 L1210.5 976 Z" fill="#bdbdbd"/>
<path d="M1286.5 976 L1289.5 982 L1292.5 976 Z" fill="#bdbdbd"/>
<path d="M1370.5 976 L1373.5 982 L1376.5 976 Z" fill="#bdbdbd"/>
<line x1="1000.5" y1="976" x2="1000.5" y2="981" stroke="#888" stroke-width="1" />
<line x1="1083.5" y1="976" x2="1083.5" y2="981" stroke="#888" stroke-width="1" />
<line x1="1166.5" y1="976" x2="1166.5" y2="981" stroke="#888" stroke-width="1" />
<line x1="1248.5" y1="976" x2="1248.5" y2="981" stroke="#888" stroke-width="1" />
<line x1="1331.5" y1="976" x2="1331.5" y2="981" stroke="#888" stroke-width="1" />
<line x1="1414.5" y1="976" x2="1414.5" y2="981" stroke="#888" stroke-width="1" />
<text x="1022.20" y="995.2" font-size="13.5" fill="#c8c8c8" textLength="39.01" lengthAdjust="spacingAndGlyphs" >-20.00</text>
<text x="1105.20" y="995.2" font-size="13.5" fill="#c8c8c8" textLength="39.01" lengthAdjust="spacingAndGlyphs" >-10.00</text>
<text x="1193.70" y="995.2" font-size="13.5" fill="#c8c8c8" textLength="25.98" lengthAdjust="spacingAndGlyphs" >0.00</text>
<text x="1273.60" y="995.2" font-size="13.5" fill="#c8c8c8" textLength="33.00" lengthAdjust="spacingAndGlyphs" >10.00</text>
<text x="1355.70" y="995.2" font-size="13.5" fill="#c8c8c8" textLength="34.00" lengthAdjust="spacingAndGlyphs" >20.00</text>
<text x="1089.00" y="1025.3" font-size="16.5" fill="#f0f0f0" textLength="235.48" lengthAdjust="spacingAndGlyphs" >Aggregate Earnings Growth (%)</text>
<text x="0.00" y="0" font-size="17.5" fill="#e8e8e8" textLength="178.00" lengthAdjust="spacingAndGlyphs" transform="translate(1511.5 700.5) rotate(90)">1 Day Price Change (%)</text>
<path d="M1252.6 614.0 L1258.1 619.5 L1252.6 625.0 L1247.1 619.5 Z" fill="#ffffff"/>
<path d="M1315.9 623.1 L1321.4 628.6 L1315.9 634.1 L1310.4 628.6 Z" fill="#9a5cc8"/>
<path d="M1253.8 660.2 L1259.3 665.7 L1253.8 671.2 L1248.3 665.7 Z" fill="#f5a030"/>
<path d="M1217.7 744.1 L1223.2 749.6 L1217.7 755.1 L1212.2 749.6 Z" fill="#6ae27a"/>
<path d="M1319.6 756.4 L1325.1 761.9 L1319.6 767.4 L1314.1 761.9 Z" fill="#e020e0"/>
<path d="M1309 763.3 L1314.5 768.8 L1309 774.3 L1303.5 768.8 Z" fill="#f26a2a"/>
<path d="M1427.6 758.4 L1433.1 763.9 L1427.6 769.4 L1422.1 763.9 Z" fill="#28b8d8"/>
<path d="M1229.3 773.6 L1234.8 779.1 L1229.3 784.6 L1223.8 779.1 Z" fill="#2aa040"/>
<path d="M1344.1 777.3 L1349.6 782.8 L1344.1 788.3 L1338.6 782.8 Z" fill="#6aa4f0"/>
<path d="M1208.4 802.5 L1213.9 808 L1208.4 813.5 L1202.9 808 Z" fill="#8a8a8a"/>
<path d="M1401.1 819.0 L1406.6 824.5 L1401.1 830.0 L1395.6 824.5 Z" fill="#f0e060"/>
<path d="M1228.5 830.0 L1234.0 835.5 L1228.5 841.0 L1223.0 835.5 Z" fill="#e02a48"/>
<rect x="1" y="1036" width="1919" height="43" fill="#1b1b1b" />
<rect x="178" y="1036" width="2" height="43" fill="#0a0a0a" />
<rect x="1048" y="1036" width="2" height="43" fill="#0a0a0a" />
<text x="25.00" y="1062" font-size="14.5" fill="#f08a30" textLength="137.50" lengthAdjust="spacingAndGlyphs" >Suggested Functions</text>
<text x="195.00" y="1062" font-size="14.5" fill="#ffffff" textLength="29.99" lengthAdjust="spacingAndGlyphs" font-weight="bold" >EEO</text>
<text x="236.30" y="1062" font-size="14.5" fill="#d8d8d8" textLength="136.94" lengthAdjust="spacingAndGlyphs" >Consensus Overview</text>
<text x="1065.00" y="1062" font-size="14.5" fill="#ffffff" textLength="41.00" lengthAdjust="spacingAndGlyphs" font-weight="bold" >IGPC</text>
<text x="1117.00" y="1062" font-size="14.5" fill="#d8d8d8" textLength="181.01" lengthAdjust="spacingAndGlyphs" >Analyze Candlestick charts</text>
</svg></body></html>
